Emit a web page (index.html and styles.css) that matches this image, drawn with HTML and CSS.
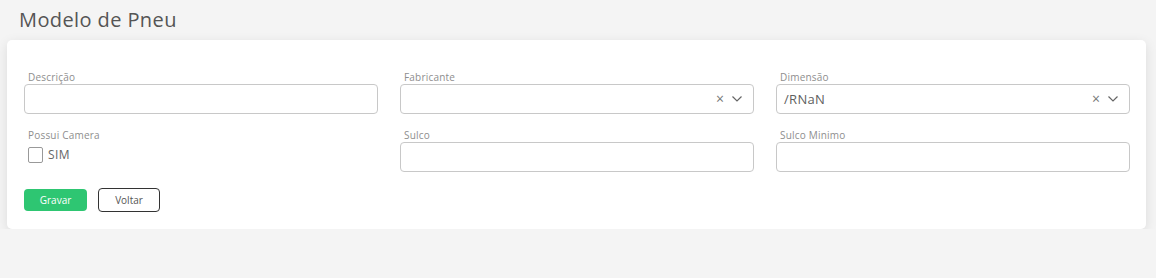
FILE: index.html
```html
<!DOCTYPE html>
<html lang="pt-BR">
<head>
    <meta charset="UTF-8">
    <meta name="viewport" content="width=device-width, initial-scale=1.0">
    <title>Modelo de Pneu</title>
    <link rel="stylesheet" href="styles.css">
</head>
<body>

<h1 class="page-title">Modelo de Pneu</h1>

<div class="card">
    <div class="form-grid">
        <div class="field">
            <label class="field-label">Descrição</label>
            <input class="field-input" type="text">
        </div>
        <div class="field">
            <label class="field-label">Fabricante</label>
            <div class="select">
                <span class="select-value"></span>
                <span class="select-clear">&times;</span>
                <svg class="select-arrow" width="12" height="8" viewBox="0 0 12 8"><path d="M1.5 1.5 L6 6 L10.5 1.5" fill="none" stroke="#666" stroke-width="1.2"/></svg>
            </div>
        </div>
        <div class="field">
            <label class="field-label">Dimensão</label>
            <div class="select">
                <span class="select-value">/RNaN</span>
                <span class="select-clear">&times;</span>
                <svg class="select-arrow" width="12" height="8" viewBox="0 0 12 8"><path d="M1.5 1.5 L6 6 L10.5 1.5" fill="none" stroke="#666" stroke-width="1.2"/></svg>
            </div>
        </div>

        <div class="field">
            <label class="field-label">Possui Camera</label>
            <label class="check">
                <span class="check-box"></span>
                <span class="check-text">SIM</span>
            </label>
        </div>
        <div class="field">
            <label class="field-label">Sulco</label>
            <input class="field-input" type="text">
        </div>
        <div class="field">
            <label class="field-label">Sulco Minimo</label>
            <input class="field-input" type="text">
        </div>
    </div>

    <div class="actions">
        <button class="btn-save">Gravar</button>
        <button class="btn-back">Voltar</button>
    </div>
</div>

</body>
</html>
```

FILE: styles.css
```css
body {
    font-family: "Open Sans", Arial, sans-serif;
    background-color: #f4f4f4;
    margin: 0;
    padding: 0 10px 0 7px;
    color: #555;
}
.page-title {
    font-size: 20px;
    font-weight: 400;
    color: #555;
    margin: 0;
    padding: 6px 0 0 12px;
    height: 34px;
    line-height: 28px;
    letter-spacing: 0.4px;
}
.card {
    background-color: white;
    border-radius: 5px;
    box-shadow: 0 3px 12px rgba(0, 0, 0, 0.1);
    padding: 30px 16px 17px 17px;
}
.form-grid {
    display: grid;
    grid-template-columns: 354px 354px 354px;
    column-gap: 22px;
    row-gap: 14px;
}
.field {
    display: flex;
    flex-direction: column;
}
.field-label {
    font-size: 10px;
    color: #8e8e8e;
    padding-left: 4px;
    height: 14px;
    line-height: 14px;
    letter-spacing: 0.2px;
}
.field-input {
    box-sizing: border-box;
    height: 30px;
    border: 1px solid #c8c8c8;
    border-radius: 4px;
    background: white;
    margin: 0;
}
.select {
    box-sizing: border-box;
    height: 30px;
    border: 1px solid #c8c8c8;
    border-radius: 4px;
    display: flex;
    align-items: center;
    padding: 0 10px 0 7px;
}
.select-value {
    flex: 1;
    font-size: 13px;
    color: #606060;
    letter-spacing: 0.3px;
}
.select-clear {
    font-size: 14px;
    color: #777;
    margin-right: 7px;
    line-height: 14px;
}
.check {
    display: flex;
    align-items: center;
    padding-left: 4px;
    margin-top: 4px;
}
.check-box {
    box-sizing: border-box;
    width: 15px;
    height: 16px;
    border: 1px solid #999;
    border-radius: 2px;
    background: white;
}
.check-text {
    font-size: 12px;
    color: #666;
    margin-left: 5px;
    letter-spacing: 0.4px;
}
.actions {
    display: flex;
    align-items: center;
    gap: 11px;
    margin-top: 16px;
}
.btn-save {
    width: 63px;
    height: 22px;
    font-family: inherit;
    font-size: 10px;
    color: white;
    background-color: #2ec672;
    border: none;
    border-radius: 4px;
    cursor: pointer;
}
.btn-back {
    width: 62px;
    height: 24px;
    font-family: inherit;
    font-size: 10px;
    color: #555;
    background-color: white;
    border: 1px solid #333;
    border-radius: 4px;
    cursor: pointer;
}
```
